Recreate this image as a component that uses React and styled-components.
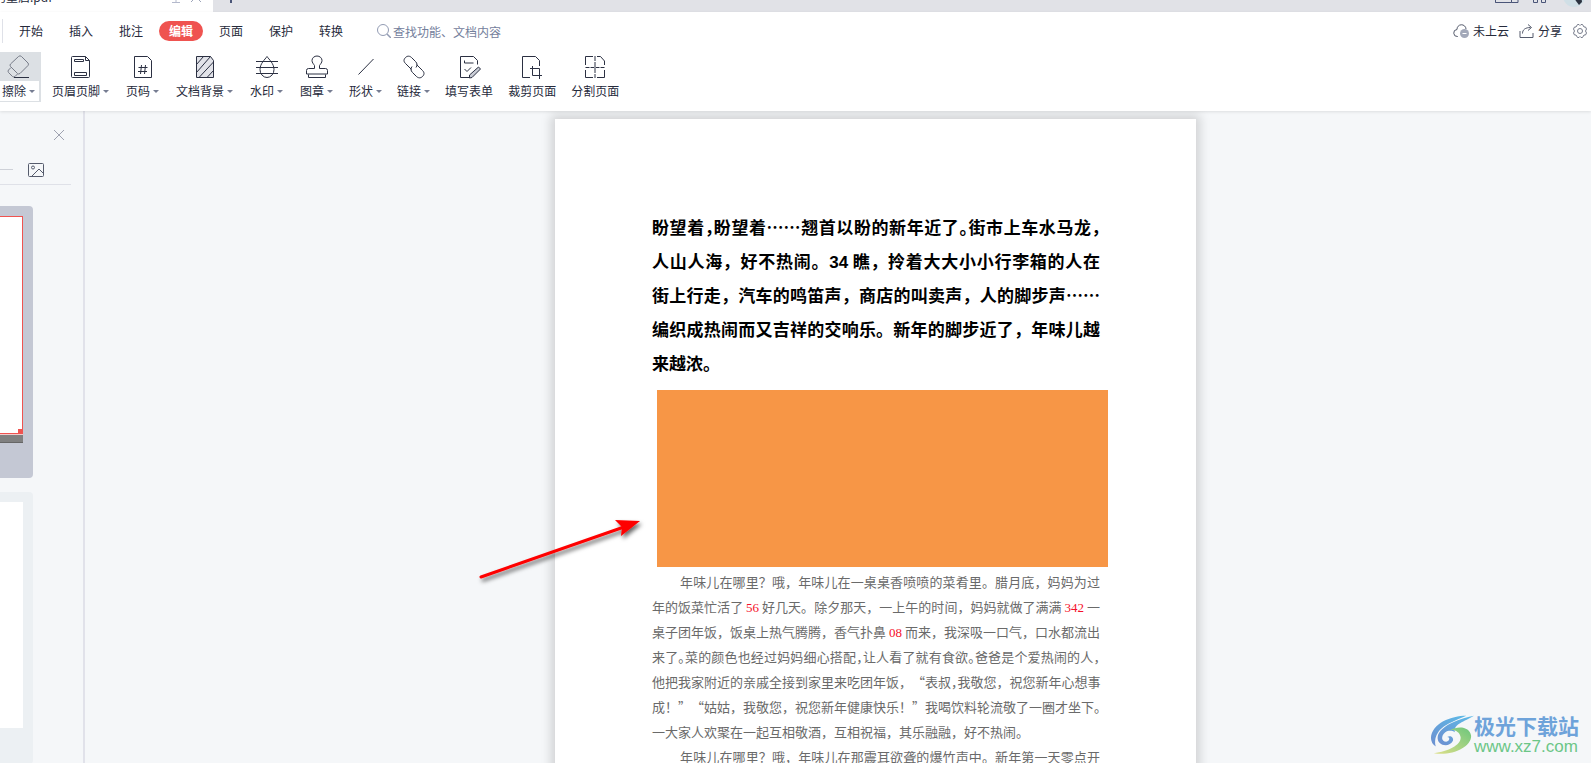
import styled, { createGlobalStyle } from "styled-components";

const GlobalStyle = createGlobalStyle`
  * {
    box-sizing: border-box;
  }
  body {
    margin: 0;
    overflow: hidden;
    color: #262a3b;
    background-color: #f5f7f9;
    font-family: "Noto Sans CJK SC", "Noto Sans", sans-serif;
    font-size: 12px;
  }
  svg {
    display: block;
    flex: none;
  }
`;

const Window = styled.div`
  position: relative;
  display: flex;
  flex-direction: column;
  height: 100vh;
  overflow: hidden;
`;

const TabStrip = styled.div`
  display: flex;
  align-items: flex-end;
  flex: none;
  height: 12px;
  overflow: hidden;
  background-color: #e1e2e7;
`;

const Tab = styled.div`
  display: flex;
  align-items: center;
  width: 219px;
  height: 36px;
  margin-left: -6px;
  padding: 6px 11px 0 0;
  background-color: #fff;
`;

const TabTitle = styled.span`
  flex: 1;
  line-height: 20px;
`;

const TabIcons = styled.div`
  display: flex;
  gap: 8px;
`;

const WindowIcons = styled.div`
  display: flex;
  align-items: flex-end;
  gap: 13px;
  margin-left: auto;
`;

const Button = styled.button`
  border: none;
  padding: 0;
  background: none;
  color: inherit;
  font: inherit;
  cursor: pointer;
`;

const NewTab = styled(Button)`
  display: flex;
  align-items: flex-end;
  height: 36px;
  padding: 0 0 9px 12px;
`;

const Header = styled.header`
  position: relative;
  flex: none;
  background-color: #fff;
  box-shadow: 0 1px 3px rgba(0, 0, 0, 0.1);
`;

const MenuBar = styled.nav`
  display: flex;
  align-items: center;
  height: 38px;
  padding: 0 3px 0 2px;
`;

const Divider = styled.div`
  width: 1px;
  height: 24px;
  margin-right: 6px;
  background-color: #dfe1e8;
`;

const MenuList = styled.div`
  display: flex;
  gap: 6px;
`;

const MenuItem = styled(Button)`
  width: 44px;
  height: 20px;
  border-radius: 10px;
  line-height: 20px;
  color: ${({ $active }) => ($active ? "#fff" : "inherit")};
  background-color: ${({ $active }) => ($active ? "#ef5350" : "transparent")};
  font-weight: ${({ $active }) => ($active ? 700 : 400)};
`;

const Search = styled.label`
  display: flex;
  align-items: center;
  gap: 2px;
  margin-left: 24px;
`;

const SearchInput = styled.input`
  width: 140px;
  border: none;
  outline: none;
  padding: 0;
  background: none;
  font: inherit;
  &::placeholder {
    color: #74809c;
    opacity: 1;
  }
`;

const MenuActions = styled.div`
  display: flex;
  align-items: center;
  gap: 10px;
  margin-left: auto;
`;

const Action = styled(Button)`
  display: flex;
  align-items: center;
  gap: 4px;
  line-height: 20px;
`;

const Toolbar = styled.div`
  display: flex;
  align-items: flex-start;
  height: 61px;
  padding-top: 2px;
`;

const ToolGroup = styled.div`
  display: flex;
  gap: ${({ $gap }) => $gap}px;
  margin-left: ${({ $start }) => $start}px;
`;

const Tool = styled(Button)`
  display: flex;
  flex-direction: column;
  align-items: center;
  gap: 2px;
  padding-top: 3px;
`;

const ToolLabel = styled.span`
  display: flex;
  align-items: center;
  gap: 3px;
  line-height: 20px;
  white-space: nowrap;
`;

const Caret = styled.span`
  border: 3px solid transparent;
  border-top-color: #767d92;
  border-bottom-width: 0;
`;

const EraseTool = styled(Tool)`
  width: 41px;
  height: 50px;
  padding: 3px 2px 2px 0;
  background-color: #dce0e4;
  align-items: stretch;

  svg {
    margin-left: 6px;
  }
`;

const EraseLabel = styled(ToolLabel)`
  padding-left: 2px;
  background-color: #fff;
`;

const Main = styled.main`
  display: flex;
  flex: 1;
  min-height: 0;
`;

const Sidebar = styled.aside`
  flex: none;
  width: 85px;
  border-right: 2px solid #e1e2ea;
  overflow: hidden;
`;

const CloseRow = styled.div`
  display: flex;
  justify-content: flex-end;
  padding: 18px 18px 0 0;
`;

const SidebarTools = styled.div`
  display: flex;
  align-items: center;
  gap: 15px;
  height: 44px;
  margin: 0 12px 21px 0;
  padding-top: 14px;
  border-bottom: 1px solid #dfe1e8;
`;

const SliderTrack = styled.div`
  width: 13px;
  height: 1px;
  background-color: #ced1d8;
`;

const Thumb = styled.div`
  width: 33px;
  height: 272px;
  margin-bottom: 14px;
  padding: 10px 10px 0 0;
  border-radius: 0 4px 4px 0;
  background-color: ${({ $active }) => ($active ? "#c4c8d4" : "#ecf0f3")};
`;

const ThumbPage = styled.div`
  display: flex;
  justify-content: flex-end;
  align-items: flex-end;
  height: ${({ $active }) => ($active ? 218 : 226)}px;
  border: ${({ $active }) => ($active ? "1px solid #ef5350" : "none")};
  border-left: none;
  background-color: #fff;
`;

const ThumbCorner = styled.span`
  width: 4px;
  height: 4px;
  background-color: #ef5350;
`;

const ThumbShade = styled.div`
  height: 9px;
  border-top: 1px solid #f4c9ca;
  border-bottom: 1px solid #666;
  background-color: #808080;
`;

const Viewer = styled.section`
  display: flex;
  justify-content: center;
  align-items: flex-start;
  flex: 1;
  min-width: 0;
  padding: 8px 0 0 75px;
  overflow: hidden;
`;

const Page = styled.article`
  flex: none;
  width: 641px;
  min-height: 906px;
  padding: 91px 96px 80px 97px;
  background-color: #fff;
  box-shadow: 0 0 10px 4px rgba(0, 0, 0, 0.15);
  text-spacing-trim: space-all;
`;

const Title = styled.h1`
  margin: 0 0 10px;
  color: #000;
  font-size: 17px;
  font-weight: 700;
  line-height: 34px;
`;

const Picture = styled.div`
  height: 177px;
  margin: 0 -8px 2px 5px;
  background-color: #f79646;
`;

const Paragraph = styled.p`
  margin: 0;
  color: #6a6a6a;
  font-size: 13px;
  line-height: 25px;
`;

const Line = styled.span`
  display: block;
  padding-left: ${({ $indent }) => ($indent ? 28 : 0)}px;
  white-space: nowrap;
  text-align: justify;
  text-align-last: ${({ $last }) => ($last ? "left" : "justify")};
`;

// half-width punctuation
const Half = styled.span`
  font-feature-settings: "halt";
`;

const Digits = styled.span`
  font-family: "Liberation Sans", sans-serif;
  line-height: 1;
`;

const Red = styled.span`
  color: #f5102a;
  font-family: "Liberation Serif", serif;
  line-height: 1;
`;

const Arrow = styled.svg`
  position: absolute;
  left: 470px;
  top: 510px;
`;

const Watermark = styled.div`
  position: absolute;
  right: 12px;
  bottom: 6px;
  display: flex;
  align-items: center;
`;

const WatermarkText = styled.div`
  display: flex;
  flex-direction: column;
  color: #6ea3da;
  font-size: 21px;
  font-weight: 700;
  line-height: 24px;
`;

const WatermarkLink = styled.a`
  color: #6cc687;
  font-family: "Liberation Sans", sans-serif;
  font-size: 17px;
  font-weight: 400;
  line-height: 20px;
  text-decoration: none;
`;

const Icon = ({ size = 24, color = "#2b3042", children }) => (
  <svg width={size} height={size} viewBox={`0 0 ${size} ${size}`} fill="none" stroke={color} aria-hidden="true">
    {children}
  </svg>
);

const icons = {
  erase: (
    <>
      <path
        d="M11.500 2.500q1.500-1.500 3 0l6.500 6.500q1 1 0 2.500l-8 8q-1.500 1-2.500 0l-7-7q-1-1.500 0-2.500z"
        stroke="#777c88"
        transform="translate(1 -1)"
      />
      <path d="M5 12.500l-2.500 2.500q-1 1 0 2.500l4 4q1.500 1 2.500 0l2.500-2.500" stroke="#777c88" />
      <path d="M8 22.500h15" />
    </>
  ),
  headerFooter: (
    <>
      <path d="M16.500 1.500H3.500q-1 0-1 1v19q0 1 1 1h16q1 0 1-1V5.500z M16.500 1.500v4h4" />
      <path d="M5.500 4.500h9v2h-9z M5.500 17.500h12v3h-12z" />
    </>
  ),
  pageNumber: (
    <>
      <path d="M3.500 1.500h13l4 4v17h-17z" />
      <path d="M10.500 10l-1 9 M14.500 10l-1 9 M7.500 12.500h9 M7 16.500h9" />
    </>
  ),
  background: (
    <>
      <path d="M3.500 1.500h14l3 4v17h-17z" fill="#e2e3e9" />
      <path d="M3.500 9.500l7-8 M3.500 17.500l14-16 M6 22.500l14.500-15.500 M14 22.500l6.500-7" />
    </>
  ),
  watermark: (
    <>
      <path d="M12 1.500c-2 3-7 7-7 13a7 8 0 0 0 14 0c0-6-5-10-7-13z" />
      <path d="M1 6.500h22 M1 12.500h22 M1 18.500h22" />
    </>
  ),
  stamp: (
    <>
      <path d="M9.500 10.500c-1-1.500-2.500-3-2.500-5a5 4.500 0 0 1 10 0c0 2-1.500 3.500-2.500 5v3h6q2 0 2 2v3.500h-21v-3.500q0-2 2-2h6z" />
      <path d="M3.500 19.500v3h17v-3" />
    </>
  ),
  line: <path d="M4.500 19.500l15-15.500" />,
  link: (
    <>
      <path d="M9.500 14.500l-6-6c-2-2-2-4 0-6s4.500-1.500 6 0l4 4c2 2 2 4 .5 6" />
      <path d="M14.500 9.500l6 6c2 2 2 4 0 6s-4.500 1.500-6 0l-4-4c-2-2-2-4-.5-6" />
    </>
  ),
  form: (
    <>
      <path d="M12 22.500H3.500v-21h13l4 4v4 M7.500 5.500v2.500h9 M7.500 14l2.500 2.500 4-4" />
      <path d="M12.500 23v-3l9-8 2 2-8.500 8.500z" fill="#c9ccd5" />
    </>
  ),
  crop: (
    <>
      <path d="M10 22.500H2.500v-21h13l4 4V11" />
      <path d="M10 13.500h9.500V24 M12.500 11v9.500H22" />
    </>
  ),
  split: (
    <>
      <path d="M10 1.500H2.500V10 M2.500 15v7.500H10 M14 22.500h7.500V15 M21.500 10V6l-4-4.500H14" />
      <path d="M12 1v22" strokeDasharray="5 1" />
      <path d="M2.500 12.500h19" strokeDasharray="4 1" />
    </>
  ),
};

const menuItems = ["开始", "插入", "批注", "编辑", "页面", "保护", "转换"];

const toolGroups = [
  {
    start: 11,
    gap: 17,
    tools: [
      { icon: "headerFooter", label: "页眉页脚", dropdown: true },
      { icon: "pageNumber", label: "页码", dropdown: true },
      { icon: "background", label: "文档背景", dropdown: true },
      { icon: "watermark", label: "水印", dropdown: true },
      { icon: "stamp", label: "图章", dropdown: true },
    ],
  },
  {
    start: 16,
    gap: 15,
    tools: [
      { icon: "line", label: "形状", dropdown: true },
      { icon: "link", label: "链接", dropdown: true },
      { icon: "form", label: "填写表单" },
      { icon: "crop", label: "裁剪页面" },
      { icon: "split", label: "分割页面" },
    ],
  },
];

const TopBar = () => (
  <TabStrip>
    <Tab>
      <TabTitle>的重启.pdf</TabTitle>
      <TabIcons>
        <Icon size={12} color="#b4b9cc">
          <path d="M1 1.500h10v6H1z M6 7.500v4 M2 11.500h8" />
        </Icon>
        <Icon size={12} color="#9ea5ba">
          <path d="M1 1l10 10 M11 1L1 11" />
        </Icon>
      </TabIcons>
    </Tab>
    <NewTab aria-label="新建标签">
      <Icon size={12} color="#4a5578">
        <path d="M6 0v12 M0 6h12" strokeWidth="2" />
      </Icon>
    </NewTab>
    <WindowIcons>
      <svg width="24" height="12" fill="none" stroke="#4a5578">
        <path d="M.5-6v8.500h14 M.5 2.500h16v-8 M16.500-5h6.500v7.500h-6.500z M19.500-1v1" />
      </svg>
      <svg width="16" height="12" fill="none" stroke="#4a5578">
        <path d="M1.500-5h4v7.500h-4z M9.500-5h4v7.500h-4z" />
      </svg>
      <svg width="30" height="12">
        <circle cx="13" cy="-4" r="11" fill="#d0dfe6" />
        <path d="M12-4l8-2 1 8-3 3-3-4z" fill="#2c3340" />
      </svg>
    </WindowIcons>
  </TabStrip>
);

const Menu = () => (
  <MenuBar>
    <Divider />
    <MenuList>
      {menuItems.map((item) => (
        <MenuItem key={item} $active={item === "编辑"}>
          {item}
        </MenuItem>
      ))}
    </MenuList>
    <Search>
      <Icon size={14} color="#929bb3">
        <circle cx="6" cy="6" r="5.500" />
        <path d="M10 10l4 4" strokeWidth="1.500" />
      </Icon>
      <SearchInput type="text" aria-label="查找" placeholder="查找功能、文档内容" />
    </Search>
    <MenuActions>
      <Action>
        <Icon size={16} color="#555b6c">
          <path d="M5 13.500H4.500a3.500 3.500 0 0 1-.5-7 4.500 4.500 0 0 1 9-.500" />
          <circle cx="11.500" cy="10.500" r="4.500" fill="#a3a9b9" stroke="none" />
          <path d="M9.500 10.500h4" stroke="#fff" />
        </Icon>
        未上云
      </Action>
      <Action>
        <Icon size={15} color="#555b6c">
          <path d="M1 7v6.500h13V9 M3.500 9.500c0-4 3-6 8-6 M9 .5l3.500 3-3.500 3" />
        </Icon>
        分享
      </Action>
      <Action aria-label="设置">
        <Icon size={16} color="#777c8b">
          <path d="M5.500 1.500h1.500l1 1 1-1h1.500l1.500 2.500h1.500l1 2-1 2 1 2-1 2H12l-1.500 2.500H9l-1-1-1 1H5.500L4 12H2.500l-1-2 1-2-1-2 1-2H4z" />
          <circle cx="8" cy="8" r="2.500" />
        </Icon>
      </Action>
    </MenuActions>
  </MenuBar>
);

const Tools = () => (
  <Toolbar>
    <EraseTool>
      <Icon>{icons.erase}</Icon>
      <EraseLabel>
        擦除
        <Caret />
      </EraseLabel>
    </EraseTool>
    {toolGroups.map((group) => (
      <ToolGroup key={group.start} $start={group.start} $gap={group.gap}>
        {group.tools.map((tool) => (
          <Tool key={tool.icon}>
            <Icon>{icons[tool.icon]}</Icon>
            <ToolLabel>
              {tool.label}
              {tool.dropdown && <Caret />}
            </ToolLabel>
          </Tool>
        ))}
      </ToolGroup>
    ))}
  </Toolbar>
);

const Thumbnails = () => (
  <Sidebar>
    <CloseRow>
      <Button aria-label="关闭">
        <Icon size={12} color="#9ea2b0">
          <path d="M1 1l10 10 M11 1L1 11" />
        </Icon>
      </Button>
    </CloseRow>
    <SidebarTools>
      <SliderTrack />
      <Button aria-label="缩略图">
        <Icon size={16} color="#555b6c">
          <rect x=".5" y="1.500" width="15" height="13" rx="1" />
          <circle cx="5" cy="5.500" r="1.500" />
          <path d="M4 14l7-7 4 4" />
        </Icon>
      </Button>
    </SidebarTools>
    <Thumb $active>
      <ThumbPage $active>
        <ThumbCorner />
      </ThumbPage>
      <ThumbShade />
    </Thumb>
    <Thumb>
      <ThumbPage />
    </Thumb>
  </Sidebar>
);

const Document = () => (
  <Page lang="zh-CN">
    <Title>
      <Line>
        盼望着<Half>，</Half>盼望着……翘首以盼的新年近了<Half>。</Half>街市上车水马龙<Half>，</Half>
      </Line>
      <Line>
        人山人海，好不热闹。<Digits>34</Digits> 瞧，拎着大大小小行李箱的人在
      </Line>
      <Line>街上行走，汽车的鸣笛声，商店的叫卖声，人的脚步声……</Line>
      <Line>编织成热闹而又吉祥的交响乐。新年的脚步近了，年味儿越</Line>
      <Line $last>来越浓。</Line>
    </Title>
    <Picture />
    <Paragraph>
      <Line $indent>年味儿在哪里？哦，年味儿在一桌桌香喷喷的菜肴里。腊月底，妈妈为过</Line>
      <Line>
        年的饭菜忙活了 <Red>56</Red> 好几天。除夕那天，一上午的时间，妈妈就做了满满 <Red>342</Red> 一
      </Line>
      <Line>
        桌子团年饭，饭桌上热气腾腾，香气扑鼻 <Red>08</Red> 而来，我深吸一口气，口水都流出
      </Line>
      <Line>
        来了<Half>。</Half>菜的颜色也经过妈妈细心搭配<Half>，</Half>让人看了就有食欲<Half>。</Half>
        爸爸是个爱热闹的人<Half>，</Half>
      </Line>
      <Line>
        他把我家附近的亲戚全接到家里来吃团年饭，“表叔<Half>，</Half>我敬您，祝您新年心想事
      </Line>
      <Line>成！”“姑姑，我敬您，祝您新年健康快乐！”我喝饮料轮流敬了一圈才坐下。</Line>
      <Line $last>一大家人欢聚在一起互相敬酒，互相祝福，其乐融融，好不热闹。</Line>
    </Paragraph>
    <Paragraph>
      <Line $indent>年味儿在哪里？哦，年味儿在那震耳欲聋的爆竹声中。新年第一天零点开</Line>
    </Paragraph>
  </Page>
);

const App = () => (
  <Window>
    <GlobalStyle />
    <TopBar />
    <Header>
      <Menu />
      <Tools />
    </Header>
    <Main>
      <Thumbnails />
      <Viewer>
        <Document />
      </Viewer>
    </Main>
    <Arrow width="190" height="80" viewBox="0 0 190 80" aria-hidden="true">
      <defs>
        <filter id="arrowShadow" x="-10%" y="-20%" width="120%" height="150%">
          <feDropShadow dx="2" dy="3" stdDeviation="2" floodOpacity="0.6" />
        </filter>
      </defs>
      <g filter="url(#arrowShadow)">
        <path d="M11 67L154 17" stroke="#fe0000" strokeWidth="3" strokeLinecap="round" />
        <path d="M170 11L145 10l7 7-1 9z" fill="#fe0000" />
      </g>
    </Arrow>
    <Watermark>
      <svg width="44" height="42" viewBox="0 0 46 42" aria-hidden="true">
        <defs>
          <linearGradient id="swirlBlue" x1="0" y1="1" x2="1" y2="0">
            <stop offset="0" stopColor="#6d8fd0" />
            <stop offset="1" stopColor="#5cbbe8" />
          </linearGradient>
          <linearGradient id="swirlGreen" x1="0" y1="1" x2="1" y2="0">
            <stop offset="0" stopColor="#dfe08a" />
            <stop offset="1" stopColor="#6cc67c" />
          </linearGradient>
        </defs>
        <path d="M38 1C22 1 2 9 1 24q0 6 5 9C3 21 12 12 22 8 28 5 33 3 38 1z" fill="url(#swirlBlue)" />
        <path
          d="M46 1C34 3 10 11 8 23c-1 9 12 12 16 4 1-4-3-6-6-4 3 0 3 4-1 5-5 0-6-6-1-10 3-2 7-2 10 0C24 10 36 7 46 1z"
          fill="url(#swirlBlue)"
        />
        <path d="M21 16c8-5 21-4 22 6 0 12-20 21-39 18C20 38 33 31 32 23c-1-5-6-8-11-7z" fill="url(#swirlGreen)" />
      </svg>
      <WatermarkText>
        极光下载站
        <WatermarkLink href="#">www.xz7.com</WatermarkLink>
      </WatermarkText>
    </Watermark>
  </Window>
);

export default App;
